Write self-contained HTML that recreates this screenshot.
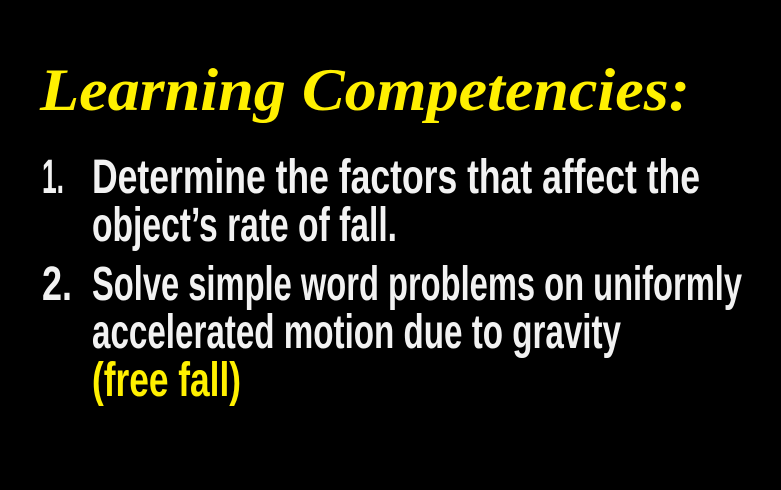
<!DOCTYPE html>
<html><head><meta charset="utf-8"><style>
html,body{margin:0;padding:0;background:#000;width:781px;height:490px;overflow:hidden}
.l{position:absolute;white-space:nowrap;line-height:1;transform-origin:0 0}
.b{font-family:"Liberation Sans Narrow","Liberation Sans",sans-serif;font-weight:bold;font-size:48px;color:#f2f2f2}
.t{font-family:"Liberation Serif",serif;font-weight:bold;font-style:italic;font-size:60px;color:#fff000}
.y{color:#fff000}
</style></head><body>
<div class="l t" data-x="40" data-w="650" style="top:60px">Learning Competencies:</div>
<div class="l b" data-x="42" data-w="22" style="top:154px">1.</div>
<div class="l b" data-x="92" data-w="608" style="top:154px">Determine the factors that affect the</div>
<div class="l b" data-x="92" data-w="305" style="top:202px">object’s rate of fall.</div>
<div class="l b" data-x="42" data-w="30" style="top:261px">2.</div>
<div class="l b" data-x="92" data-w="650" style="top:261px">Solve simple word problems on uniformly</div>
<div class="l b" data-x="92" data-w="529" style="top:309px">accelerated motion due to gravity</div>
<div class="l b y" data-x="92" data-w="149" style="top:357px">(free fall)</div>
<script>
document.querySelectorAll('.l').forEach(function(e){
  e.style.left=e.dataset.x+'px';
  var w=e.getBoundingClientRect().width;
  e.style.transform='scaleX('+(e.dataset.w/w)+')';
});
</script>
</body></html>
